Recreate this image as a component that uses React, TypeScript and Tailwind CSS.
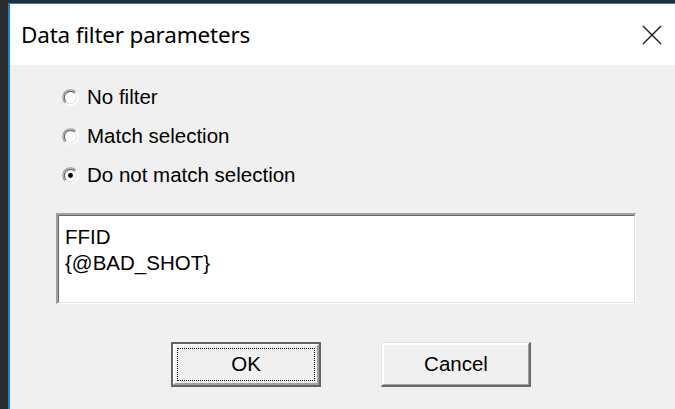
import { useState } from 'react';

const options = ['No filter', 'Match selection', 'Do not match selection'];

function Radio({ checked }: { checked: boolean }) {
  return (
    <svg width="17" height="17" viewBox="0 0 18 18" className="shrink-0">
      <circle cx="9" cy="9" r="8" fill="#ffffff" />
      {/* sunken rim: dark upper-left, light lower-right */}
      <path d="M3.3 14.7 A8 8 0 0 1 14.7 3.3" fill="none" stroke="#a0a0a0" strokeWidth="1.5" />
      <path d="M4.4 13.6 A6.5 6.5 0 0 1 13.6 4.4" fill="none" stroke="#696969" strokeWidth="1.3" />
      <path d="M14.7 3.3 A8 8 0 0 1 3.3 14.7" fill="none" stroke="#ffffff" strokeWidth="1.5" />
      <path d="M13.6 4.4 A6.5 6.5 0 0 1 4.4 13.6" fill="none" stroke="#e3e3e3" strokeWidth="1.3" />
      {checked && <circle cx="9" cy="9" r="2.6" fill="#000000" />}
    </svg>
  );
}

export default function App() {
  const [mode, setMode] = useState(2);
  const label = "font-['Liberation_Sans',Arial,sans-serif] text-[20.5px] text-black";

  return (
    <div className="w-[675px] h-[409px] overflow-hidden bg-[#2b2d31] pl-[8px] pt-[3px]">
      <div className="h-full flex flex-col border-l-2 border-t border-[#1a82d8]">
        <header className="h-[61px] bg-white flex items-center justify-between pl-[11px] pr-[10px]">
          <h1 className="font-['Noto_Sans',sans-serif] text-[22.5px] text-black tracking-[-0.2px]">
            Data filter parameters
          </h1>
          <svg width="22" height="22" viewBox="0 0 22 22" className="mr-[2px]">
            <path d="M2 2 L20 20 M20 2 L2 20" stroke="#1a1a1a" strokeWidth="1.4" />
          </svg>
        </header>

        <main className="flex-1 bg-[#f0f0f0] pl-[46px] pr-[39px] pt-[23px]">
          <div className="flex flex-col gap-[20px]">
            {options.map((o, i) => (
              <label key={o} className="flex items-center gap-[8px] h-[19px] pl-[6px]" onClick={() => setMode(i)}>
                <Radio checked={mode === i} />
                <span className={label}>{o}</span>
              </label>
            ))}
          </div>

          <div className="mt-[28px] h-[91px] border-t-2 border-l-2 border-[#a0a0a0] border-b border-r border-b-white border-r-white">
            <div className="h-full bg-white border-t border-l border-[#696969] border-b border-r border-b-[#e3e3e3] border-r-[#e3e3e3] px-[6px] pt-[8px]">
              <div className={`${label} leading-[26px]`}>
                <div>FFID</div>
                <div>{'{@BAD_SHOT}'}</div>
              </div>
            </div>
          </div>

          <div className="mt-[38px] flex gap-[60px] pl-[115px]">
            <button className="w-[150px] h-[45px] border-2 border-[#646464] bg-[#f0f0f0]">
              <div className="h-full border-t-2 border-l-2 border-white border-b-2 border-r-2 border-b-[#a0a0a0] border-r-[#a0a0a0] p-[2px]">
                <div className={`h-full flex items-center justify-center border border-dotted border-black ${label}`}>OK</div>
              </div>
            </button>
            <button className="w-[150px] h-[45px] border-t border-l border-[#e3e3e3] border-b-2 border-r-2 border-b-[#696969] border-r-[#696969] bg-[#f0f0f0]">
              <div className={`h-full flex items-center justify-center border-t-2 border-l-2 border-white border-b border-r border-b-[#a0a0a0] border-r-[#a0a0a0] ${label}`}>
                Cancel
              </div>
            </button>
          </div>
        </main>
      </div>
    </div>
  );
}
